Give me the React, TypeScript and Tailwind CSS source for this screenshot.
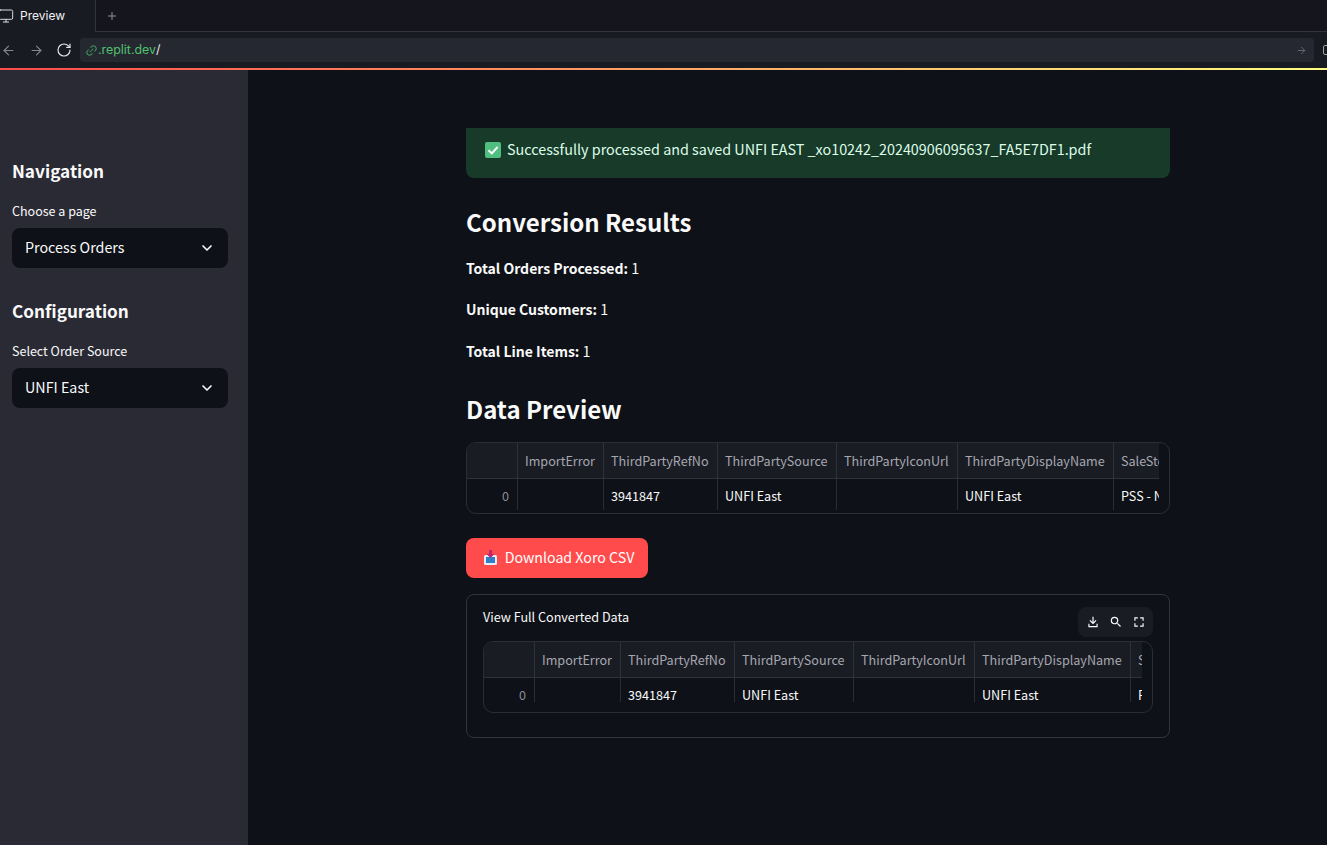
import { ArrowLeft, ArrowRight, ChevronDown, Link2, Monitor, Plus, RotateCw } from "lucide-react";

const font = "font-['Noto_Sans_CJK_SC','Noto_Sans',sans-serif]";

const columns = [
  { name: "ImportError", width: "w-[86px]", value: "" },
  { name: "ThirdPartyRefNo", width: "w-[114px]", value: "3941847" },
  { name: "ThirdPartySource", width: "w-[119px]", value: "UNFI East" },
  { name: "ThirdPartyIconUrl", width: "w-[121px]", value: "" },
  { name: "ThirdPartyDisplayName", width: "w-[156px]", value: "UNFI East" },
  { name: "SaleStoreName", width: "w-[140px]", value: "PSS - North" },
];

function DataTable({ viewport, rowHeight, footer }: { viewport: string; rowHeight: string; footer: string }) {
  return (
    <div className="rounded-[10px] border border-[#2b2d36] overflow-hidden">
      <div className={`${viewport} overflow-hidden`}>
        <div className="flex w-[800px] h-[36px] bg-[#1a1c24] border-b border-[#2f313b] text-[12.6px] leading-[36px] text-[#a6a8b0]">
          <div className="w-[51px] shrink-0 border-r border-[#2f313b]" />
          {columns.map((c) => (
            <div key={c.name} className={`${c.width} shrink-0 border-r border-[#2f313b] pl-[7px] whitespace-nowrap overflow-hidden`}>
              {c.name}
            </div>
          ))}
        </div>
        <div className={`flex w-[800px] ${rowHeight} text-[12.6px] leading-[33px] text-[#fafafa]`}>
          <div className="w-[51px] shrink-0 border-r border-[#2b2d36] pr-[8px] text-right text-[#8b8d94]">0</div>
          {columns.map((c) => (
            <div key={c.name} className={`${c.width} shrink-0 border-r border-[#2b2d36] pl-[7px] whitespace-nowrap overflow-hidden`}>
              {c.value}
            </div>
          ))}
        </div>
      </div>
      <div className={footer} />
    </div>
  );
}

function SidebarSelect({ title, label, value }: { title: string; label: string; value: string }) {
  return (
    <section>
      <h2 className="text-[17.2px] leading-[28px] font-semibold text-[#fafafa]">{title}</h2>
      <div className="mt-[16px] text-[12.5px] leading-[20px] text-[#fafafa]">{label}</div>
      <div className="mt-[7px] h-[40px] rounded-lg bg-[#0e1117] flex items-center justify-between px-[13px] text-[14.3px] text-[#fafafa]">
        <span className="-mt-[2px]">{value}</span>
        <ChevronDown size={16} strokeWidth={2.5} />
      </div>
    </section>
  );
}

function BrowserChrome() {
  return (
    <header className="bg-[#191b23] text-[#d8d9dd] font-['Inter',sans-serif]">
      <div className="flex h-[32px]">
        <div className="w-[98px] -ml-[2px] border-r border-[#33353e] flex items-center gap-[6px] text-[12px]">
          <Monitor size={16} strokeWidth={1.5} />
          <span className="text-[#f2f2f4]">Preview</span>
        </div>
        <div className="flex-1 border-b border-[#33353e] bg-[#15161d] flex items-center pl-[10px] text-[#8f9198]">
          <Plus size={12} strokeWidth={2} />
        </div>
      </div>
      <div className="flex h-[36px] items-center pl-[1px]">
        <ArrowLeft size={15} strokeWidth={1.75} className="shrink-0 text-[#85878e]" />
        <ArrowRight size={15} strokeWidth={1.75} className="shrink-0 ml-[13px] text-[#85878e]" />
        <RotateCw size={16} strokeWidth={1.75} className="shrink-0 ml-[12px] text-[#e6e7ea]" />
        <div className="ml-[8px] h-[24px] w-[1234px] shrink-0 rounded-[4px] bg-[#262831] flex items-center pl-[5px] text-[12.4px]">
          <Link2 size={13} strokeWidth={1.75} className="text-[#3f9a5a] -rotate-45" />
          <span className="text-[#4fc16d]">.replit.dev</span>
          <span className="text-[#e6e7ea]">/</span>
          <ArrowRight size={11} strokeWidth={1.75} className="ml-auto mr-[7px] text-[#72747c]" />
        </div>
        <div className="ml-[9px] h-[10px] w-[10px] shrink-0 rounded-[2px] border border-[#a0a2a9]" />
      </div>
      <div className="h-[2px] bg-[linear-gradient(90deg,#ff4b4b,#fffd80)]" />
    </header>
  );
}

export default function App() {
  return (
    <div className={`${font} h-[845px] w-[1327px] overflow-hidden bg-[#0e1117] flex flex-col`}>
      <BrowserChrome />
      <div className="flex flex-1">
        <aside className="w-[248px] shrink-0 bg-[#2a2a35] pl-[12px] pr-[20px] pt-[87px] flex flex-col gap-[29px]">
          <SidebarSelect title="Navigation" label="Choose a page" value="Process Orders" />
          <SidebarSelect title="Configuration" label="Select Order Source" value="UNFI East" />
        </aside>
        <main className="flex-1 pt-[58px] pl-[218px] pr-[157px] text-[#fafafa]">
          <div className="h-[50px] rounded-b-lg bg-[#173a29] text-[#dffde9] flex items-center pl-[19px] pb-[7px] text-[14.35px]">
            <svg width="16" height="16" viewBox="0 0 16 16" className="shrink-0">
              <rect width="16" height="16" rx="2" fill="#4fbf7f" />
              <path d="M3.5 8.3 6.8 11.4 12.6 5" fill="none" stroke="#fff" strokeWidth="2" />
            </svg>
            <span className="ml-[6px] -mt-[2px]">Successfully processed and saved UNFI EAST _xo10242_20240906095637_FA5E7DF1.pdf</span>
          </div>

          <h1 className="mt-[24px] text-[24px] leading-[40px] font-semibold">Conversion Results</h1>
          <div className="mt-[14px] flex flex-col gap-[17.4px] text-[14.35px] leading-[24px]">
            <p><strong className="font-semibold text-[14px]">Total Orders Processed:</strong> 1</p>
            <p><strong className="font-semibold text-[14px]">Unique Customers:</strong> 1</p>
            <p><strong className="font-semibold text-[14px]">Total Line Items:</strong> 1</p>
          </div>

          <h2 className="mt-[26px] text-[24px] leading-[40px] font-semibold">Data Preview</h2>
          <div className="mt-[13px]">
            <DataTable viewport="w-[692px] h-[67px]" rowHeight="h-[31px]" footer="h-[3px]" />
          </div>

          <button className="mt-[24px] h-[40px] w-[182px] rounded-lg bg-[#ff4b4b] flex items-center justify-center gap-[7px] pl-[3px] text-[14.2px] text-white">
            <svg width="15" height="15" viewBox="0 0 15 15">
              <rect x="1" y="5" width="13" height="10" rx="1.5" fill="#e8edf5" />
              <path d="M3 7h9v6H3z" fill="#2f80c8" />
              <path d="M6 0h3v4h2.5l-4 4-4-4H6z" fill="#c2246b" />
            </svg>
            <span className="-mt-[1px]">Download Xoro CSV</span>
          </button>

          <section className="mt-[16px] h-[144px] rounded-lg border border-[#33353e] px-[16px] pt-[12px]">
            <div className="flex items-start justify-between h-[34px]">
              <span className="text-[12.6px] leading-[20px] text-[#fafafa]">View Full Converted Data</span>
              <div className="h-[30px] w-[75px] rounded-lg bg-[#1a1c24] flex items-center justify-center gap-[9px]">
                <svg width="14" height="14" viewBox="0 0 24 24" fill="#fafafa">
                  <path d="M11 3h2v9l3.5-3.5L18 10l-6 6-6-6 1.5-1.5L11 12zM4 15h2v4h12v-4h2v6H4z" />
                </svg>
                <svg width="14" height="14" viewBox="0 0 24 24" fill="#fafafa">
                  <path d="M15.5 14h-.79l-.28-.27A6.47 6.47 0 0 0 16 9.5 6.5 6.5 0 1 0 9.5 16c1.61 0 3.09-.59 4.23-1.57l.27.28v.79l5 4.99L20.49 19l-4.99-5zm-6 0C7.01 14 5 11.99 5 9.5S7.01 5 9.5 5 14 7.01 14 9.5 11.99 14 9.5 14z" />
                </svg>
                <svg width="14" height="14" viewBox="0 0 24 24" fill="#fafafa">
                  <path d="M4 4h6v2H6v4H4zM14 4h6v6h-2V6h-4zM4 14h2v4h4v2H4zM18 14h2v6h-6v-2h4z" />
                </svg>
              </div>
            </div>
            <DataTable viewport="w-[658px] h-[60px]" rowHeight="h-[24px]" footer="h-[10px]" />
          </section>
        </main>
      </div>
    </div>
  );
}
